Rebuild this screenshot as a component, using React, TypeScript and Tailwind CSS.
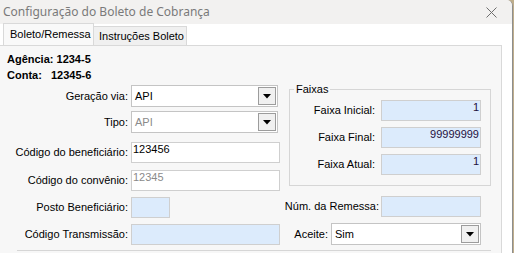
import React from 'react';

const ui = { fontFamily: '"Liberation Sans", Arial, sans-serif' };

const ComboArrow: React.FC = () => (
  <div className="flex h-full w-[18px] items-center justify-center border border-[#9c9c9c] bg-[#f0f0f0]">
    <svg width="8" height="5" viewBox="0 0 8 5">
      <polygon points="0,0 8,0 4,4.5" fill="#000" />
    </svg>
  </div>
);

const Combo: React.FC<{ value: string; disabled?: boolean; className?: string }> = ({
  value,
  disabled,
  className = ''
}) => (
  <div
    className={`flex h-[22px] items-stretch border border-[#c4c4c4] bg-white p-[1px] ${className}`}
  >
    <span
      className={`flex-1 self-center pl-[2px] text-[11px] ${disabled ? 'text-[#8a8a8a]' : 'text-black'}`}
    >
      {value}
    </span>
    <ComboArrow />
  </div>
);

const TextBox: React.FC<{
  value?: string;
  blue?: boolean;
  muted?: boolean;
  right?: boolean;
  className?: string;
}> = ({ value = '', blue, muted, right, className = '' }) => (
  <div
    className={`h-[21px] border border-[#cfcfcf] px-[1px] text-[11px] leading-[13px] ${
      blue ? 'bg-[#dcebfc]' : 'bg-white'
    } ${muted ? 'text-[#8a8a8a]' : right ? 'text-[#1e1040]' : 'text-black'} ${
      right ? 'text-right pr-[1px]' : ''
    } ${className}`}
  >
    {value}
  </div>
);

const Label: React.FC<{ text: string; className?: string }> = ({ text, className = '' }) => (
  <span className={`flex shrink-0 justify-end whitespace-nowrap text-[11px] text-black ${className}`}>
    <span>{text}</span>
  </span>
);

export default function App() {
  return (
    <div className="flex h-[253px] w-[514px] overflow-hidden bg-[#bfae8c]" style={ui}>
      <div className="flex h-full w-[513px] flex-col overflow-hidden rounded-tr-[6px] border-r border-[#8e8e8e] bg-white">
        {/* barra de título */}
        <div className="flex h-[24px] shrink-0 items-center justify-between bg-[#f2f1f0] pl-[3px] pr-[15px]">
          <span
            className="text-[12px] text-[#7a7a7a]"
            style={{ fontFamily: '"Noto Sans", "Open Sans", sans-serif' }}
          >
            Configuração do Boleto de Cobrança
          </span>
          <svg width="11" height="11" viewBox="0 0 11 11">
            <path d="M0.5 0.5 L10.5 10.5 M10.5 0.5 L0.5 10.5" stroke="#6e6e6e" strokeWidth="1" />
          </svg>
        </div>

        <div className="flex flex-1">
          <div className="flex w-[502px] flex-col">
            {/* abas */}
            <div className="relative flex h-[21px] items-end">
              <div className="relative z-10 ml-[3px] flex h-[22px] w-[91px] items-center border border-b-0 border-[#d9d9d9] bg-[#f9f9f9] pl-[6px] text-[11px] text-black">
                Boleto/Remessa
              </div>
              <div className="flex h-[19px] w-[93px] items-center border border-b-0 border-l-0 border-[#d9d9d9] bg-[#f0f0f0] pl-[5px] text-[11px] text-black">
                Instruções Boleto
              </div>
            </div>

            {/* painel */}
            <div className="relative flex-1 border-t border-r border-[#d9d9d9] bg-[#f7f7f7]">
              <div className="pl-[7px] pt-[5px] text-[11px] font-bold leading-[16px] text-black">
                <div>Agência: 1234-5</div>
                <div className="whitespace-pre">Conta:   12345-6</div>
              </div>

              <div className="flex">
                {/* coluna esquerda */}
                <div className="flex w-[289px] flex-col pt-[2px]">
                  <div className="flex items-center">
                    <Label text="Geração via:" className="w-[131px] pr-[3px]" />
                    <Combo value="API" className="w-[147px]" />
                  </div>
                  <div className="mt-[4px] flex items-center">
                    <Label text="Tipo:" className="w-[131px] pr-[3px]" />
                    <Combo value="API" disabled className="w-[147px]" />
                  </div>
                  <div className="mt-[9px] flex items-center">
                    <Label text="Código do beneficiário:" className="w-[131px] pr-[3px]" />
                    <TextBox value="123456" className="w-[149px]" />
                  </div>
                  <div className="mt-[7px] flex items-center">
                    <Label text="Código do convênio:" className="w-[131px] pr-[3px]" />
                    <TextBox value="12345" muted className="w-[149px]" />
                  </div>
                  <div className="mt-[6px] flex items-center">
                    <Label text="Posto Beneficiário:" className="w-[131px] pr-[3px]" />
                    <TextBox blue className="w-[39px]" />
                  </div>
                  <div className="mt-[6px] flex items-center">
                    <Label text="Código Transmissão:" className="w-[131px] pr-[3px]" />
                    <TextBox blue className="w-[149px]" />
                  </div>
                </div>

                {/* coluna direita */}
                <div className="flex w-[202px] flex-col">
                  <fieldset className="h-[103px] border border-[#d6d6d6] px-0 pb-0 pt-0">
                    <legend className="ml-[4px] px-[2px] text-[11px] leading-[12px] text-black">
                      Faixas
                    </legend>
                    <div className="flex flex-col pt-[5px]">
                      <div className="flex items-center">
                        <Label text="Faixa Inicial:" className="w-[91px] pr-[6px]" />
                        <TextBox value="1" blue right className="w-[100px]" />
                      </div>
                      <div className="mt-[6px] flex items-center">
                        <Label text="Faixa Final:" className="w-[91px] pr-[6px]" />
                        <TextBox value="99999999" blue right className="w-[100px]" />
                      </div>
                      <div className="mt-[6px] flex items-center">
                        <Label text="Faixa Atual:" className="w-[91px] pr-[6px]" />
                        <TextBox value="1" blue right className="w-[100px]" />
                      </div>
                    </div>
                  </fieldset>
                  <div className="mt-[10px] flex items-center">
                    <Label text="Núm. da Remessa:" className="w-[92px] pr-[2px]" />
                    <TextBox blue className="w-[100px]" />
                  </div>
                  <div className="mt-[6px] flex items-center">
                    <Label text="Aceite:" className="w-[42px] pr-[3px]" />
                    <Combo value="Sim" className="w-[150px]" />
                  </div>
                </div>
              </div>

              <div className="ml-[17px] mt-[5px] h-px w-[474px] bg-[#d6d6d6]" />
            </div>
          </div>
          <div className="flex-1 bg-white" />
        </div>
      </div>
    </div>
  );
}
